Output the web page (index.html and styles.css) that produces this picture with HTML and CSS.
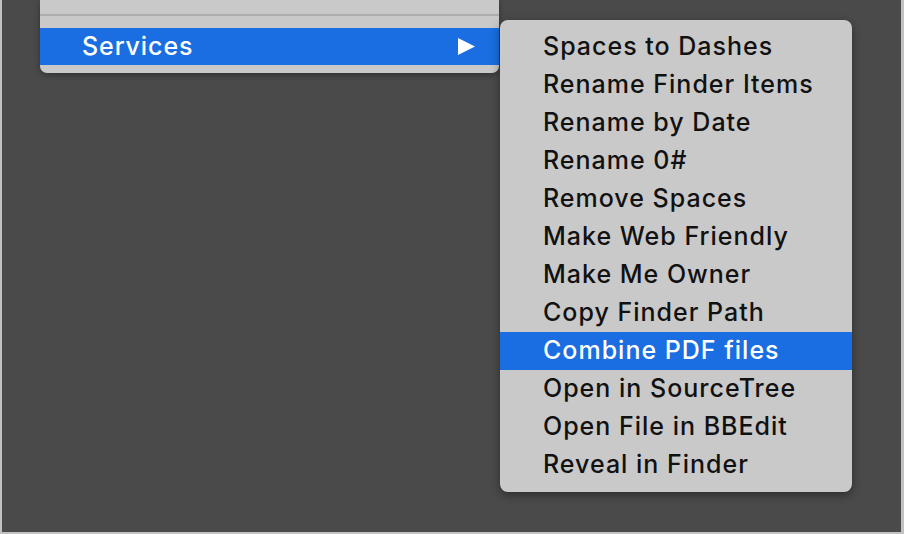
FILE: index.html
```html
<!DOCTYPE html>
<html>
<head>
<meta charset="utf-8">
<link rel="stylesheet" href="styles.css">
</head>
<body>
<div class="screen">
  <div class="menu">
    <div class="menu-top"></div>
    <div class="sep"></div>
    <div class="item selected">
      <span>Services</span>
      <svg class="arrow" width="17" height="17" viewBox="0 0 17 17"><polygon points="0,0 17,8.5 0,17" fill="#fff"/></svg>
    </div>
  </div>
  <div class="submenu">
    <div class="sitem">Spaces to Dashes</div>
    <div class="sitem">Rename Finder Items</div>
    <div class="sitem">Rename by Date</div>
    <div class="sitem">Rename 0#</div>
    <div class="sitem">Remove Spaces</div>
    <div class="sitem">Make Web Friendly</div>
    <div class="sitem">Make Me Owner</div>
    <div class="sitem">Copy Finder Path</div>
    <div class="sitem selected">Combine PDF files</div>
    <div class="sitem">Open in SourceTree</div>
    <div class="sitem">Open File in BBEdit</div>
    <div class="sitem">Reveal in Finder</div>
  </div>
</div>
</body>
</html>
```
FILE: styles.css
```css
html, body {
  margin: 0;
  padding: 0;
}
body {
  width: 904px;
  height: 534px;
  overflow: hidden;
  font-family: "Inter", "Liberation Sans", sans-serif;
}
.screen {
  box-sizing: border-box;
  width: 904px;
  height: 534px;
  background: #4a4a4a;
  border-left: 2px solid #c2c2c2;
  border-right: 3px solid #c2c2c2;
  border-bottom: 2px solid #c2c2c2;
  display: flex;
  align-items: flex-start;
}
.menu {
  margin-left: 38px;
  width: 459px;
  background: #c9c9c9;
  border-radius: 0 0 7px 7px;
  box-shadow: 0 2px 6px rgba(0,0,0,0.35);
  padding-bottom: 8px;
}
.menu-top {
  height: 14px;
}
.sep {
  height: 2px;
  background: #aeaeae;
  margin-bottom: 12px;
}
.item {
  height: 37px;
  display: flex;
  align-items: center;
  justify-content: space-between;
  padding: 0 24px 0 42px;
  font-size: 25px;
  font-weight: 500;
  letter-spacing: 0.9px;
  color: #111;
}
.item span {
  margin-top: -2px;
}
.selected {
  background: #1a6ee1;
  color: #fff;
}
.arrow {
  display: block;
}
.submenu {
  margin-top: 20px;
  margin-left: 1px;
  width: 352px;
  background: #c9c9c9;
  border-radius: 8px;
  box-shadow: 0 3px 10px rgba(0,0,0,0.4);
  padding: 8px 0;
}
.sitem {
  height: 38px;
  line-height: 36px;
  padding-left: 43px;
  font-size: 25px;
  font-weight: 500;
  letter-spacing: 1px;
  color: #111;
  white-space: nowrap;
}
.sitem.selected {
  color: #fff;
}
```
